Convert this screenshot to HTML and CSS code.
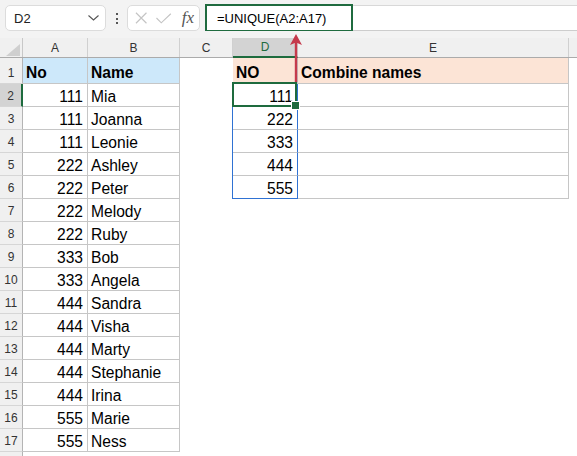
FILE: index.html
```html
<!DOCTYPE html>
<html lang="en">
<head>
  <meta charset="UTF-8">
  <title>UNIQUE sheet</title>
  <link rel="stylesheet" href="styles.css">
</head>
<body>
  <!-- formula bar -->
  <div class="toolbar">
    <div class="namebox">
      <span>D2</span>
      <svg width="11" height="6" viewBox="0 0 11 6"><path d="M0.5 0.5 L5.5 5 L10.5 0.5" fill="none" stroke="#555" stroke-width="1.1"/></svg>
    </div>
    <div class="dots"><i></i><i></i><i></i></div>
    <div class="fxbox">
      <svg width="13" height="12" viewBox="0 0 13 12"><path d="M1 0.5 L12 11.5 M12 0.5 L1 11.5" stroke="#c4c4c4" stroke-width="1.2" fill="none"/></svg>
      <svg width="16" height="11" viewBox="0 0 16 11"><path d="M0.5 5 L5.5 10 L15.5 0.5" stroke="#c4c4c4" stroke-width="1.2" fill="none"/></svg>
      <span class="fx">fx</span>
    </div>
    <div class="formula">
      <span class="hl">=UNIQUE(A2:A17)</span>
    </div>
  </div>

  <!-- grid -->
  <div class="sheet">
    <div class="row colhead">
      <div class="corner"><svg width="14" height="12" viewBox="0 0 14 12"><path d="M14 0 L14 12 L0 12 Z" fill="#cfcfcf"/></svg></div>
      <div class="ch">A</div>
      <div class="ch">B</div>
      <div class="ch">C</div>
      <div class="ch active">D</div>
      <div class="ch">E</div>
      <div class="ch last"></div>
    </div>

    <div class="row r1">
      <div class="rh">1</div>
      <div class="cell bold blue">No</div>
      <div class="cell bold blue">Name</div>
      <div></div>
      <div class="cell bold peach">NO</div>
      <div class="cell bold peach">Combine names</div>
      <div></div>
    </div>
    <div class="row">
      <div class="rh active">2</div>
      <div class="cell num">111</div>
      <div class="cell">Mia</div>
      <div class="spl"></div>
      <div class="cell num spill sel">111</div>
      <div class="cell"></div>
      <div></div>
    </div>
    <div class="row">
      <div class="rh">3</div>
      <div class="cell num">111</div>
      <div class="cell">Joanna</div>
      <div class="spl"></div>
      <div class="cell num spill">222</div>
      <div class="cell"></div>
      <div></div>
    </div>
    <div class="row">
      <div class="rh">4</div>
      <div class="cell num">111</div>
      <div class="cell">Leonie</div>
      <div class="spl"></div>
      <div class="cell num spill">333</div>
      <div class="cell"></div>
      <div></div>
    </div>
    <div class="row">
      <div class="rh">5</div>
      <div class="cell num">222</div>
      <div class="cell">Ashley</div>
      <div class="spl"></div>
      <div class="cell num spill">444</div>
      <div class="cell"></div>
      <div></div>
    </div>
    <div class="row">
      <div class="rh">6</div>
      <div class="cell num">222</div>
      <div class="cell">Peter</div>
      <div class="spl"></div>
      <div class="cell num spill end">555</div>
      <div class="cell"></div>
      <div></div>
    </div>
    <div class="row">
      <div class="rh">7</div>
      <div class="cell num">222</div>
      <div class="cell">Melody</div>
    </div>
    <div class="row">
      <div class="rh">8</div>
      <div class="cell num">222</div>
      <div class="cell">Ruby</div>
    </div>
    <div class="row">
      <div class="rh">9</div>
      <div class="cell num">333</div>
      <div class="cell">Bob</div>
    </div>
    <div class="row">
      <div class="rh">10</div>
      <div class="cell num">333</div>
      <div class="cell">Angela</div>
    </div>
    <div class="row">
      <div class="rh">11</div>
      <div class="cell num">444</div>
      <div class="cell">Sandra</div>
    </div>
    <div class="row">
      <div class="rh">12</div>
      <div class="cell num">444</div>
      <div class="cell">Visha</div>
    </div>
    <div class="row">
      <div class="rh">13</div>
      <div class="cell num">444</div>
      <div class="cell">Marty</div>
    </div>
    <div class="row">
      <div class="rh">14</div>
      <div class="cell num">444</div>
      <div class="cell">Stephanie</div>
    </div>
    <div class="row">
      <div class="rh">15</div>
      <div class="cell num">444</div>
      <div class="cell">Irina</div>
    </div>
    <div class="row">
      <div class="rh">16</div>
      <div class="cell num">555</div>
      <div class="cell">Marie</div>
    </div>
    <div class="row">
      <div class="rh">17</div>
      <div class="cell num">555</div>
      <div class="cell">Ness</div>
    </div>
    <div class="row">
      <div class="rh"></div>
    </div>

    <!-- annotation arrow pointing at the formula -->
    <svg class="arrow" width="16" height="50" viewBox="0 0 16 50">
      <path d="M8 1 L14 12 L8 9.5 L2 12 Z" fill="#c53a4c"/>
      <rect x="6.8" y="9" width="2.4" height="40" fill="#c53a4c"/>
    </svg>
  </div>
</body>
</html>
```

FILE: styles.css
```css
* {
  box-sizing: border-box;
}

body {
  margin: 0;
  width: 577px;
  height: 456px;
  overflow: hidden;
  background: #fff;
  font-family: "Liberation Sans", Arial, sans-serif;
  color: #000;
}

/* formula bar */
.toolbar {
  display: flex;
  align-items: flex-start;
  height: 31px;
  padding-top: 5px;
  background: #f3f3f3;
}

.namebox {
  display: flex;
  align-items: center;
  justify-content: space-between;
  width: 101px;
  height: 26px;
  margin-left: 5px;
  padding: 0 6px 0 8px;
  background: #fff;
  border: 1px solid #dcdcdc;
  border-radius: 5px;
  font-size: 13px;
  color: #222;
}

.dots {
  display: flex;
  flex-direction: column;
  gap: 2.5px;
  margin: 8px 0 0 10px;
}

.dots i {
  display: block;
  width: 2px;
  height: 2px;
  background: #555;
}

.fxbox {
  display: flex;
  align-items: center;
  width: 73px;
  height: 26px;
  margin-left: 9px;
  padding: 0 5px 0 7px;
  gap: 9px;
  background: #fff;
  border: 1px solid #dcdcdc;
  border-radius: 5px;
}

.fx {
  margin-left: 1px;
  font-family: "Liberation Serif", "Times New Roman", serif;
  font-style: italic;
  font-size: 17px;
  color: #555;
}

.formula {
  flex: 1;
  height: 26px;
  margin-left: 5px;
  background: #fff;
  border-top: 1px solid #d8d8d8;
  border-bottom: 1px solid #cdcdcd;
}

.hl {
  display: flex;
  align-items: center;
  width: 148px;
  height: 28px;
  margin-top: -2px;
  padding-left: 10px;
  border: 2px solid #1f6b3f;
  font-size: 13px;
}

/* sheet */
.sheet {
  position: relative;
  padding-top: 7px;
  background: linear-gradient(#f3f3f3, #f3f3f3) top / 100% 27px no-repeat;
}

.row {
  display: grid;
  grid-template-columns: 23px 65px 92px 53px 65px 271px 1fr;
  height: 23px;
}

.row.r1 {
  height: 26px;
}

.colhead {
  height: 20px;
  background: #f0f0f0;
  border-bottom: 1px solid #ababab;
}

.corner {
  display: flex;
  align-items: flex-end;
  justify-content: flex-end;
  padding: 0 2px 1px 0;
  border-right: 1px solid #c8c8c8;
}

.ch {
  display: flex;
  align-items: center;
  justify-content: center;
  font-size: 12px;
  color: #333;
  border-right: 1px solid #d0d0d0;
}

.ch.last {
  border-right: none;
}

.ch.active {
  background: #d3d3d3;
  color: #1e6b3e;
  border-bottom: 2px solid #1e6b3e;
  margin-bottom: -1px;
}

.rh {
  display: flex;
  align-items: flex-end;
  justify-content: center;
  padding-bottom: 3px;
  font-size: 12px;
  color: #333;
  background: #f0f0f0;
  border-right: 1px solid #b4b4b4;
  border-bottom: 1px solid #d6d6d6;
}

.rh.active {
  background: #d3d3d3;
  border-right: 2px solid #1e6b3e;
}

.cell {
  display: flex;
  align-items: flex-end;
  padding: 0 3px 1px 3px;
  font-size: 15.6px;
  line-height: 17px;
  white-space: nowrap;
  border-right: 1px solid #c6c6c6;
  border-bottom: 1px solid #c6c6c6;
}

.num {
  justify-content: flex-end;
  padding-right: 4px;
}

.bold {
  font-weight: bold;
  padding-bottom: 2px;
}

.blue {
  background: #cde8fa;
}

.peach {
  background: #fce4d6;
}

/* spill range D2:D6 */
.spl {
  border-right: 1px solid #2f72d3;
}

.spill {
  position: relative;
  border-right-color: #2f72d3;
}

.spill.end {
  border-bottom-color: #2f72d3;
}

.sel::after {
  content: "";
  position: absolute;
  left: -1px;
  top: -2px;
  right: 0;
  bottom: -1px;
  border: 2px solid #1e6b3e;
}

.sel::before {
  content: "";
  position: absolute;
  right: -3px;
  bottom: -4px;
  width: 7px;
  height: 7px;
  background: #1e6b3e;
  border: 1px solid #fff;
  z-index: 1;
}

.arrow {
  position: absolute;
  left: 288px;
  top: 2px;
}
```
